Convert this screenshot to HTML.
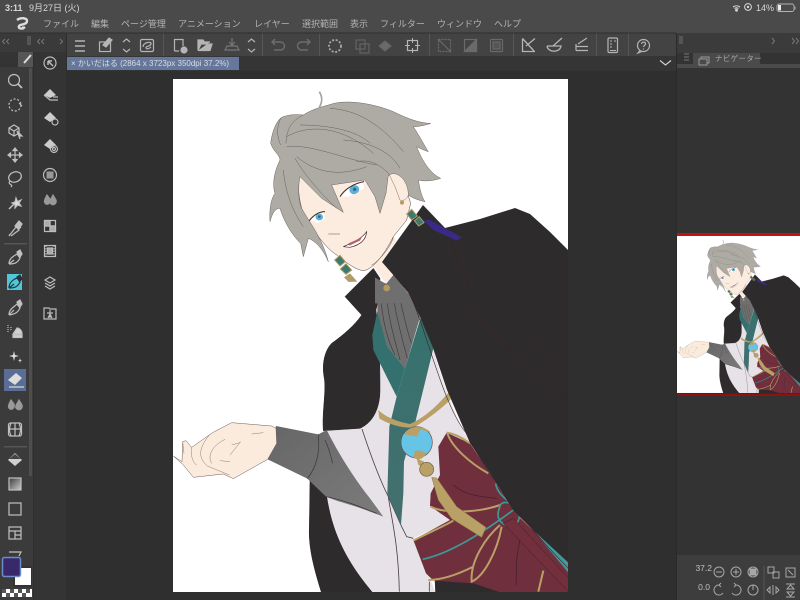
<!DOCTYPE html>
<html><head><meta charset="utf-8"><style>
html,body{margin:0;padding:0;background:#2f2f2f}
#p{position:relative;width:800px;height:600px;overflow:hidden;background:#2f2f2f;font-family:"Liberation Sans","Noto Sans CJK JP",sans-serif}
.a{position:absolute}
.m{position:absolute;top:18px;font-size:9px;line-height:12px;color:#b4b4b4;white-space:nowrap}
svg{position:absolute;left:0;top:0}
</style></head><body><div id="p">
<div class="a" style="left:0;top:0;width:800px;height:33px;background:#4a4a4a"></div>
<div class="a" style="left:67px;top:33px;width:610px;height:23px;background:#434343"></div>
<div class="a" style="left:67px;top:56px;width:610px;height:15px;background:#353535"></div>
<div class="a" style="left:0;top:33px;width:67px;height:567px;background:#343434"></div>
<div class="a" style="left:0;top:52px;width:33px;height:548px;background:#3b3b3b"></div>
<div class="a" style="left:0;top:33px;width:67px;height:19px;background:#3a3a3a"></div>
<div class="a" style="left:676px;top:33px;width:124px;height:567px;background:#333"></div>
<div class="a" style="left:677px;top:33px;width:123px;height:20px;background:#3b3b3b"></div>
<div class="a" style="left:677px;top:64px;width:123px;height:4px;background:#4a4a4a"></div>
<div class="a" style="left:693px;top:53px;width:67px;height:11px;background:#4a4a4a"></div>
<div class="a" style="left:677px;top:555px;width:123px;height:45px;background:#3d3d3d"></div>
<div class="a" style="left:67px;top:57px;width:172px;height:13px;background:#66779c"></div>
<div class="a" style="left:71px;top:57px;font-size:8px;line-height:13px;color:#d8dce4;white-space:nowrap">× かいだはる (2864 x 3723px 350dpi 37.2%)</div>
<div class="a" style="left:5px;top:1px;font-size:9px;line-height:14px;font-weight:700;color:#d8d8d8;white-space:nowrap">3:11</div>
<div class="a" style="left:29px;top:1px;font-size:9px;line-height:14px;color:#d8d8d8;white-space:nowrap">9月27日 (火)</div>
<div class="a" style="left:756px;top:1px;font-size:9px;line-height:14px;color:#d8d8d8;white-space:nowrap">14%</div>
<div class="m" style="left:43px">ファイル</div><div class="m" style="left:91px">編集</div><div class="m" style="left:121px">ページ管理</div><div class="m" style="left:178px">アニメーション</div><div class="m" style="left:254px">レイヤー</div><div class="m" style="left:302px">選択範囲</div><div class="m" style="left:350px">表示</div><div class="m" style="left:380px">フィルター</div><div class="m" style="left:437px">ウィンドウ</div><div class="m" style="left:494px">ヘルプ</div>
<div class="a" style="left:715px;top:53px;font-size:7.5px;line-height:12px;color:#a8a8a8;white-space:nowrap;letter-spacing:.3px">ナビゲーター</div>
<div class="a" style="left:690px;top:563px;width:22px;text-align:right;font-size:8.5px;line-height:11px;color:#c0c0c0">37.2</div>
<div class="a" style="left:688px;top:582px;width:22px;text-align:right;font-size:8.5px;line-height:11px;color:#c0c0c0">0.0</div>

<svg width="800" height="600" viewBox="0 0 800 600">
<defs>
<linearGradient id="gs" x1="0" y1="0" x2="1" y2="1"><stop offset="0" stop-color="#666"/><stop offset="1" stop-color="#7c7c7c"/></linearGradient>
<linearGradient id="gt" x1="0" y1="0" x2="0" y2="1"><stop offset="0" stop-color="#35716e"/><stop offset="1" stop-color="#44706f"/></linearGradient>
<clipPath id="cp"><rect x="173" y="79" width="395" height="513"/></clipPath>
<g id="art">
<rect x="173" y="79" width="395" height="513" fill="#fff"/>
<g clip-path="url(#cp)">
<!-- body, zoom6 coordinates -->
<g transform="translate(300 280) scale(.33333)">
<path d="M80,450 L185,445 C220,430 240,380 225,200 L400,205 C430,320 470,420 512,490 L560,700 L455,720 L340,775 L385,880 L406,936 L220,936 C170,890 125,810 100,730 L80,655Z" fill="#e7e2e7"/>
<path d="M228,90 C240,190 240,280 240,330 C240,390 215,430 180,445 L70,452 C65,400 80,330 72,290 C65,250 75,210 95,190 C130,165 165,135 185,105 L135,50 L220,-35 L240,-5 L235,60Z" fill="#2e2b2c" stroke="#2a2022" stroke-width="1.5"/>
<path d="M30,600 L80,650 C95,740 125,830 220,940 L65,940 C40,860 25,800 28,740Z" fill="#2e2b2c" stroke="#2a2022" stroke-width="1.5"/>
<path d="M186,447 C210,520 240,600 265,650 C275,720 295,790 298,935 M265,650 L305,740 L320,770 L340,775 M388,935 L388,905" fill="none" stroke="#4c4248" stroke-width="2.5"/>
<path d="M232,0 L330,40 L360,112 L315,265 L262,200 L232,100Z" fill="#6f6f6f"/>
<path d="M260,50 C265,120 290,200 300,240 M280,50 C290,120 310,190 322,235 M300,60 C315,120 325,170 335,190 M244,70 C250,130 262,180 285,225" fill="none" stroke="#423c3e" stroke-width="2"/>
<path d="M232,95 L217,165 L220,210 L290,350 L315,265 L262,200Z" fill="#33706e"/>
<path d="M362,112 L400,205 L345,430 L312,545 L310,640 L303,735 L262,640 L268,440 L290,350 L315,265Z" fill="url(#gt)"/>
<path d="M235,390 C255,410 290,425 330,432 C370,415 410,380 445,338 L452,358 C420,390 380,420 340,443 C300,445 260,430 238,415Z" fill="#b9a066"/>
<path d="M404,895 L520,895 L620,940 L406,940Z" fill="#2e2b2c"/>
<path d="M440,458 L510,490 L570,580 L640,690 L700,750 L815,880 L815,940 L610,940 L520,910 L400,902 L378,880 L340,780 L450,720 L390,678 L392,640 L420,585 L415,500Z" fill="#6f2f3c"/>
<path d="M700,750 L815,855 L815,890 L740,800Z" fill="#44989a"/>
<path d="M440,458 C470,462 495,480 510,490 M442,460 C455,500 510,550 565,580 M392,680 C430,700 530,700 600,675 M340,782 C380,760 420,745 460,722 M385,900 C430,900 480,880 520,860 M600,735 C560,770 510,840 515,905 C550,890 590,820 605,740 M730,872 L715,935 M660,710 L700,748" fill="none" stroke="#b9a066" stroke-width="6"/>
<path d="M368,838 C430,825 520,780 640,690 M587,610 C590,640 620,660 640,675 M600,680 C585,710 600,735 630,738 C660,735 670,700 640,675 C615,660 600,670 600,680" fill="none" stroke="#3c9a98" stroke-width="5"/>
<path d="M460,615 C500,650 550,650 590,655 M660,780 C645,840 650,880 648,915" fill="none" stroke="#3e1f28" stroke-width="2"/>
<path d="M610,730 L640,715 L815,905 L815,940 L805,935Z" fill="#732f3c" stroke="#3e1f28" stroke-width="1.5"/>
<path d="M395,592 L410,594 L470,680 L558,742 L545,772 L455,716 L415,660Z" fill="#b9a066" stroke="#8c7848" stroke-width="1.5"/>
<circle cx="350" cy="487" r="47" fill="#66c4e6" stroke="#5d5345" stroke-width="2"/>
<path d="M312,462 C330,435 375,435 392,458 L362,448 L350,470 L325,465Z M340,532 C355,545 370,535 380,520 L362,512 L345,512Z" fill="#b9a066"/>
<path d="M350,535 L372,545 L370,560 L355,555Z" fill="#b9a066"/>
<circle cx="380" cy="568" r="21" fill="#b9a066" stroke="#6c5f43" stroke-width="2"/>
</g>
<!-- right cloak, real coordinates -->
<path d="M423,205 L445,228 L480,219 L515,208 L530,214 L550,232 L572,254 V566 L533,530 L513,510 L490,473 L470,443 L447,390 L433,348 L420,317 L408,292 L382,262Z" fill="#2e2b2c"/>
<path d="M405,285 C425,320 440,400 466,433 C490,480 530,530 570,570 M465,300 C485,325 535,375 570,400 M525,323 L570,397 M382,262 L408,292 M396,258 L432,222 M445,228 L470,290" fill="none" stroke="#3a2326" stroke-width=".6"/>
<!-- sleeve & hand, zoom7 coords -->
<g transform="translate(170 400) scale(.33333)">
<path d="M318,78 L445,103 L470,90 C510,170 560,245 600,295 L640,350 L600,335 C550,315 500,305 468,290 L412,236 L293,178Z" fill="url(#gs)"/>
<path d="M445,103 C450,160 440,200 412,236 M470,290 C520,300 570,320 620,340 M465,120 C475,140 482,165 488,190" fill="none" stroke="#3c3436" stroke-width="2"/>
<path d="M10,168 L36,185 L38,125 L48,122 L65,142 L118,105 L128,98 L135,94 L185,68 L305,78 L318,85 L320,130 L293,178 L190,236 L160,222 L70,232 L40,195Z" fill="#fbebdc" stroke="#6a5a54" stroke-width="1.5"/>
<path d="M245,102 L280,98 M65,142 C60,165 70,190 80,195 M118,105 C90,140 80,170 112,198 L178,225 M165,118 C130,135 110,165 125,190 M150,182 L180,185 M185,135 L210,128 M180,165 L212,125 M38,125 L42,160" fill="none" stroke="#7a6a64" stroke-width="1.3"/>
</g>
<!-- head, zoom5 coords -->
<g transform="translate(260 80) scale(.33333)">
<path d="M335,553 L378,610 L400,585 L365,545 L410,480 L400,470Z" fill="#fcecdf"/>
<path d="M345,592 L378,612 L400,585 L445,640 L430,670 L345,670Z" fill="#6f6f6f"/>
<circle cx="380" cy="624" r="10" fill="#b59a5c"/>
<path d="M118,290 C110,340 125,380 125,385 C145,430 190,500 230,525 C260,550 290,570 310,572 C335,570 370,530 400,470 L440,420 L452,370 L430,300 L400,270 L300,240 L150,270Z" fill="#fcecdf" stroke="#4c4040" stroke-width="1.5"/>
<path d="M70,110 C90,103 110,103 130,105 C160,85 190,80 215,72 C260,58 340,70 400,95 C440,115 480,130 512,130 C490,138 470,140 460,140 C480,170 495,200 505,215 C490,210 480,205 470,200 C485,240 510,280 542,295 C520,303 490,305 475,300 C480,330 485,350 495,365 C470,360 450,350 440,342 L425,300 L385,285 L378,340 L360,400 L345,350 L315,300 L215,315 L250,397 L185,355 L120,290 C110,340 122,385 125,385 C150,430 185,470 205,545 C190,510 170,485 145,475 L130,530 L122,490 C95,465 70,420 60,385 C48,385 38,395 30,425 C28,400 30,360 45,340 C35,310 45,270 60,240 C60,225 40,215 32,190 C35,160 50,115 70,110Z" fill="#aeaba4" stroke="#5a5350" stroke-width="1.3"/>
<path d="M178,35 C190,55 185,70 178,82" fill="none" stroke="#a5a29b" stroke-width="5"/>
<path d="M62,115 C50,140 50,170 62,195 M130,105 C100,120 80,140 78,190 M80,170 C150,130 250,140 340,220 M120,135 C200,135 290,150 330,190 M210,85 C290,90 360,130 430,215 M250,180 C320,185 390,210 420,265 M80,200 C150,190 260,240 350,255 M110,230 C170,280 240,290 320,260 M290,245 C340,235 380,260 430,340 M105,235 C125,270 170,330 230,385 M70,270 C75,330 95,390 130,440" fill="none" stroke="#5a5350" stroke-width="1.3"/>
<path d="M388,285 C410,270 445,300 445,345 C440,360 425,365 420,360 L405,320Z" fill="#fcecdf" stroke="#6d5e55" stroke-width="1.3"/>
<path d="M245,350 L265,325 L310,305 L312,325 L265,350Z" fill="#fff"/>
<ellipse cx="283" cy="329" rx="15" ry="13" fill="#5eaed6" transform="rotate(-22 283 329)"/><circle cx="284" cy="328" r="5" fill="#2f6a8c"/>
<path d="M240,350 C255,325 285,310 312,305" fill="none" stroke="#33272a" stroke-width="3"/>
<path d="M150,420 L190,398 L195,415 L172,430Z" fill="#fff"/>
<ellipse cx="178" cy="411" rx="11" ry="10" fill="#5eaed6"/><circle cx="178" cy="410" r="4" fill="#2f6a8c"/>
<path d="M148,422 C160,405 178,395 195,395" fill="none" stroke="#33272a" stroke-width="3"/>
<path d="M250,500 C285,485 305,475 320,455 C318,480 300,495 270,502Z" fill="#fff" stroke="#3b2626" stroke-width="2"/>
<path d="M265,490 C285,482 300,475 308,468 L300,482 L268,497Z" fill="#b5616a"/>
<path d="M205,462 L240,462 M400,470 C395,500 350,550 335,555" fill="none" stroke="#5c4c48" stroke-width="1.5"/>
<g fill="#3d7a6e" stroke="#b09c6a" stroke-width="3"><path d="M224,540 L240,526 L256,545 L240,558Z M241,567 L258,551 L275,570 L258,583Z"/><path d="M440,402 L455,388 L472,408 L455,420Z M463,422 L478,410 L492,428 L476,438Z"/></g>
<path d="M252,592 L270,580 L292,605 L266,606Z" fill="#b09c6a"/>
<circle cx="426" cy="368" r="6" fill="#b59a5c"/>
<path d="M490,420 L510,420 L605,472 L590,482 L520,450Z" fill="#3a2a86"/>
</g>
</g>
</g>
</defs>
<use href="#art"/>
<rect x="677" y="233" width="123" height="163" fill="#2f2f2f"/>
<use href="#art" transform="translate(623 211.7) scale(.312 .3062)"/>
<rect x="677" y="233" width="123" height="2" fill="#c80f0f"/>
<rect x="677" y="394" width="123" height="2" fill="#8e1212"/>

<!-- status & logo -->
<path d="M17,20 C21,17 27,18 27,21 C27,25 20,24 19,26 C18,28 21,30 25,27 M24,29 L22,27" fill="none" stroke="#ddd" stroke-width="2.4"/>
<g fill="none" stroke="#d8d8d8"><path d="M733,7 a6,6 0 0 1 7,0 M734.5,8.5 a3.5,3.5 0 0 1 4,0" stroke-width="1.1"/><circle cx="736.5" cy="10.2" r=".9" fill="#d8d8d8"/><circle cx="748" cy="7" r="3.4" stroke-width="1"/><circle cx="748" cy="7" r="1.2" fill="#d8d8d8" stroke="none"/><rect x="777" y="4" width="17" height="7.5" rx="2" stroke-width=".7"/></g>
<rect x="778" y="5" width="3" height="5.5" fill="#eee"/><rect x="794.6" y="6.5" width="1" height="3" fill="#999"/>

<!-- toolbar separators -->
<g stroke="#565656"><path d="M163.500,33V56M262.500,33V56M319.500,33V56M429.500,33V56M513.500,33V56M596.500,33V56M628.500,33V56"/></g>
<path d="M0,33H676M66.500,33V600M33.500,52V600" stroke="#2f2f2f" stroke-width="1" fill="none"/>
<path d="M676.500,33V600" stroke="#2a2a2a"/>
<!-- toolbar icons -->
<g fill="none" stroke="#b5b5b5" stroke-width="1.2">
<path d="M75,41H85M75,46H85M75,51H85" stroke-width="1.6"/>
<rect x="99.500" y="42" width="11" height="9.500"/><path d="M103,45 L109,38 L112,40 L106,47 Z" fill="#b5b5b5"/>
<path d="M123,42 L126.500,39 L130,42M123,49 L126.500,52 L130,49"/>
<rect x="140.500" y="39.500" width="13" height="12" rx="1.500"/><path d="M143,47 C143,42 152,41 151,44 C150,47 145,46 146,48 C147,50 150,48 151,47"/>
<path d="M174.500,51 V39.500 H183 V46 M174.500,51 H179"/><circle cx="184" cy="50" r="3" fill="#b5b5b5"/>
<path d="M198,50.500 V40 H203 L204.500,42 H210 M198,50.500 H210 L212,44 H201 L198,50.500" fill="#b5b5b5"/>
<g stroke="#777"><path d="M225,50 H239 L237,46 H227 Z M232,38 V45 M229,42 L232,45 L235,42"/></g>
<path d="M248,42 L251.500,39 L255,42M248,49 L251.500,52 L255,49"/>
<g stroke="#6d6d6d" stroke-width="1.400"><path d="M272,42 H280 C286,42 286,50 280,50 H274 M275,39 L272,42 L275,45"/><path d="M310,42 H302 C296,42 296,50 302,50 H308 M307,39 L310,42 L307,45"/></g>
<circle cx="335" cy="46" r="6" stroke-dasharray="2 1.600" stroke="#a8a8a8" stroke-width="1.800"/>
<g stroke="#636363"><rect x="356" y="40" width="9" height="9"/><rect x="360" y="44" width="9" height="9"/><path d="M385,41 L391,46 L385,51 L379,46 Z" fill="#6a6a6a"/></g>
<rect x="407.500" y="40.500" width="10" height="10"/><path d="M412.500,38V43M405,45.500h5M415,45.500h5M412.500,48V53" stroke-width="1"/>
<g stroke="#6a6a6a"><rect x="438.500" y="39.500" width="12" height="12" stroke-dasharray="2 1"/><path d="M438,39 L451,52"/><rect x="464.500" y="39.500" width="12" height="12"/><path d="M464.500,51.500 L476.500,39.500 V51.500Z" fill="#6a6a6a"/><rect x="490.500" y="39.500" width="12" height="12" rx="1"/><rect x="493" y="42" width="7" height="7" fill="#555"/></g>
<path d="M522.500,38.500 V51.500 H535 M522.500,38.500 L534,51 M526,46 L535,38.500" stroke-width="1.300"/>
<path d="M547,46 H561 C560,53 548,53 547,46 M553,46 L562,38" stroke-width="1.300"/>
<path d="M576,50.500 H588 M576,50.500 V44 M578,44 L587,38 M576,46.500 H588" stroke-width="1.200"/>
<rect x="608" y="38" width="9.500" height="14.500" rx="1.200"/><path d="M610,41h2M614,41h2M610,44h2M610,47h2M610,50.500h6" stroke-width="1.100"/>
<circle cx="643.500" cy="45.500" r="6" stroke-width="1.200"/><path d="M641.500,44 C641.500,41.500 646,41.500 645.500,44 C645,45.500 643.500,45.500 643.500,47 M643.500,48.500V49.500M640,50.500 L638,53 L642,51.500"/>
<path d="M660,60.500 L665.500,65 L671,60.500" stroke="#d0d0d0"/>
</g>
<!-- panel arrows -->
<g fill="none" stroke="#777" stroke-width="1">
<path d="M5,39 L2.500,41.500 L5,44 M9,39 L6.500,41.500 L9,44 M40,39 L37.500,41.500 L40,44 M44,39 L41.500,41.500 L44,44 M60,39 L62.500,41.500 L60,44 M772,38 L774.500,41 L772,44 M792,38 L794.500,41 L792,44 M796,38 L798.500,41 L796,44"/>
<path d="M5,55H12M5,58H12M5,61H12M684,54H689M684,57H689M684,60H689"/>
</g>
<rect x="27" y="36" width="4" height="9" fill="#555"/><rect x="679" y="36" width="4" height="8" fill="#555"/>
<rect x="0" y="52" width="18" height="15" fill="#343434"/><rect x="18" y="52" width="15" height="15" fill="#555"/>
<path d="M24,63 L31,55" stroke="#ddd" stroke-width="2"/>
<rect x="29" y="68" width="3" height="408" fill="#4e4e4e"/>
<!-- navigator tab icon -->
<g fill="none" stroke="#9a9a9a"><rect x="701" y="57" width="8" height="6"/><rect x="699" y="59" width="8" height="6" fill="#4a4a4a"/></g>
<!-- left tools -->
<rect x="7" y="274" width="15" height="16" fill="#4fc7da"/>
<rect x="4" y="369" width="22" height="22" fill="#5a6d94"/>
<rect x="4" y="243" width="23" height="1.500" fill="#555"/><rect x="4" y="446" width="23" height="1.500" fill="#555"/>
<g fill="none" stroke="#c0c0c0" stroke-width="1.200">
<circle cx="14" cy="80" r="5.500"/><path d="M18,84 L22,88" stroke-width="1.800"/>
<circle cx="15" cy="105" r="6" stroke-dasharray="2 1.800"/><path d="M19,103 L22,106"/>
<path d="M9,128 L14,125 L19,128 V133 L14,136 L9,133Z M9,128 L14,131 L19,128 M14,131V136"/><path d="M17,131 L22,136 L19,136 L20,139Z" fill="#c0c0c0"/>
<path d="M15,148V162M8,155H22M15,148l-2,2.500h4zM15,162l-2,-2.500h4zM8,155l2.500,-2v4zM22,155l-2.500,-2v4z" fill="#c0c0c0"/>
<ellipse cx="15" cy="177" rx="6.500" ry="5" transform="rotate(-20 15 177)"/><path d="M10,181 C7,185 14,184 11,187"/>
<path d="M9,209 L14,204" stroke-width="1.500"/><path d="M16,198 L17.500,201.500 L21,200 L19,203 L21,206 L17.500,205 L15,208 L15,204.500 L12,203 L15,202Z" fill="#ddd"/>
<path d="M10,234 L9,236 L16,227 L19,230 L11,236 M17,224 L21,228"/><path d="M15,226 L19,221 L22,224 L19,229Z" fill="#c0c0c0"/>
<path d="M9,264 C9,258 14,256 17,254 L20,258 C18,262 16,264 9,264 M14,260 L9,264"/><path d="M17,252 L20,250 L22,254 L20,257Z" fill="#c0c0c0"/>
<g stroke="#20363c"><path d="M9,288 C9,282 14,279 17,278 L20,282 C18,286 16,288 9,288 M14,284 L9,288"/><path d="M17,277 L20,275 L22,279 L20,281Z" fill="#20363c"/></g>
<path d="M9,315 C9,309 14,307 17,304 L20,308 C18,312 16,314 9,315 M14,310 L9,315"/><path d="M17,302 L20,300 L22,304 L20,307Z" fill="#c0c0c0"/>
<path d="M13,334 H22 C22,330 19,328 17,328 Z" fill="#d0d0d0"/><rect x="13" y="335" width="9" height="2.500" fill="#d0d0d0"/><path d="M8,325 V332 M11,327 V330" stroke-dasharray="1 1"/>
<path d="M14,351 L15,355 L19,356 L15,357 L14,361 L13,357 L9,356 L13,355Z M20,358 L20.500,360 L22,360.500 L20.500,361 L20,363 L19.500,361 L18,360.500 L19.500,360Z" fill="#ddd" stroke="none"/>
<path d="M8,380 L16,373 L22,378 L15,385Z" fill="#ddd" stroke="none"/><path d="M9,387 H24" stroke="#ddd"/>
<path d="M11,400 C9,404 7,407 10,409 C13,410 15,407 14,404 Z M19,400 C17,404 14,407 17,409 C20,411 23,408 22,405 Z" fill="#999" stroke="#999"/>
<rect x="8.500" y="423" width="13" height="13" rx="2"/><path d="M8.500,429H21.500M15,423V436M11,423 C9,428 9,431 11,436M19,423 C21,428 21,431 19,436"/>
<path d="M15,453 L22,460 L15,466 L8,460 Z" fill="#d0d0d0" stroke="none"/><path d="M9,459 L15,454 L21,459Z" fill="#444" stroke="none"/>
<defs><linearGradient id="gg" x1="0" y1="0" x2="1" y2="1"><stop offset="0" stop-color="#3b3b3b"/><stop offset="1" stop-color="#ccc"/></linearGradient></defs>
<rect x="9" y="478" width="12" height="12" fill="url(#gg)"/>
<rect x="9" y="503" width="12" height="12"/>
<rect x="9" y="527" width="12" height="12"/><path d="M9,531H21M15,531V539M15,535H21"/>
<path d="M9,552 H21 L19,556"/>
</g>
<!-- colors -->
<rect x="13" y="566" width="19" height="21" fill="#333"/>
<rect x="15" y="568" width="16" height="17" fill="#fff"/>
<rect x="2.500" y="557.500" width="18" height="19" rx="2" fill="#38296b" stroke="#6c8ccc" stroke-width="1.500"/>
<rect x="2" y="589" width="30" height="8" fill="#fff"/>
<path d="M2,589h4v4h-4zM10,589h4v4h-4zM18,589h4v4h-4zM26,589h4v4h-4zM6,593h4v4h-4zM14,593h4v4h-4zM22,593h4v4h-4z" fill="#555"/>
<!-- subpanel icons -->
<g fill="none" stroke="#bcbcbc" stroke-width="1.200">
<circle cx="50" cy="63" r="6"/><path d="M48,61 L53,66 M48,61 H52 M48,61 V65" stroke-width="1.500"/>
<path d="M44,95 L50,89 L56,95 L50,98Z" fill="#ccc" stroke="none"/><path d="M44,95 L50,100 H58 M53,97h5M53,100h5"/>
<path d="M44,118 L50,112 L56,118 L50,122Z" fill="#ccc" stroke="none"/><circle cx="55" cy="122" r="3"/>
<path d="M44,145 L50,139 L56,145 L50,149Z" fill="#ccc" stroke="none"/><circle cx="54" cy="149" r="3.500"/><circle cx="54" cy="149" r="1.500"/>
<circle cx="50" cy="175" r="6.500"/><rect x="46.500" y="171.500" width="7" height="7" fill="#999" stroke="none"/>
<path d="M47,195 C45,199 43,202 46,204 C49,205 51,202 50,199 Z M53,195 C51,199 49,202 51,204 C54,206 57,203 56,200 Z" fill="#999" stroke="#999"/>
<rect x="44.500" y="220.500" width="11" height="11"/><path d="M50,220.500V231.500M44.500,226H55.500"/><rect x="44.500" y="220.500" width="5.500" height="5.500" fill="#aaa"/><rect x="50" y="226" width="5.500" height="5.500" fill="#aaa"/>
<rect x="44.500" y="245.500" width="11" height="11"/><rect x="47.500" y="248" width="5" height="6" fill="#aaa"/><path d="M46,245.500V256.500M54,245.500V256.500" stroke-dasharray="1.500 1"/>
<path d="M45,280 L50,277 L55,280 L50,283Z M45,283 L50,286 L55,283 M45,286 L50,289 L55,286"/>
<path d="M44,308 H49 L50,309 H56 V319 H44Z M50,310 V318 M47,313 H53 M50,314 L48,318 M50,314 L52,318"/>
</g>
<!-- nav controls -->
<g fill="none" stroke="#a8a8a8" stroke-width="1">
<circle cx="719" cy="572" r="5"/><path d="M716,572h6"/>
<circle cx="736" cy="572" r="5"/><path d="M733,572h6M736,569v6"/>
<circle cx="753" cy="572" r="5"/><rect x="750" y="569" width="6" height="6" fill="#a8a8a8"/>
<path d="M764,566V600" stroke="#555"/>
<rect x="768" y="567" width="6" height="6"/><rect x="773" y="572" width="6" height="6"/>
<rect x="786" y="568" width="9" height="9"/><path d="M788,570l5,5"/>
<path d="M723,593 A5,5 0 1 1 719,585 M721,583 L719,585 L721,587"/>
<path d="M732,593 A5,5 0 1 0 736,585 M734,583 L736,585 L734,587"/>
<circle cx="753" cy="590" r="5"/><path d="M753,590v-5"/>
<path d="M773,585V595M770,587v6l-3,-3zM776,587v6l3,-3z"/>
<path d="M786,584H795M786,597H795M787,589h7l-3.500,-4zM787,592h7l-3.500,4z"/>
</g>
</svg>
</div></body></html>
